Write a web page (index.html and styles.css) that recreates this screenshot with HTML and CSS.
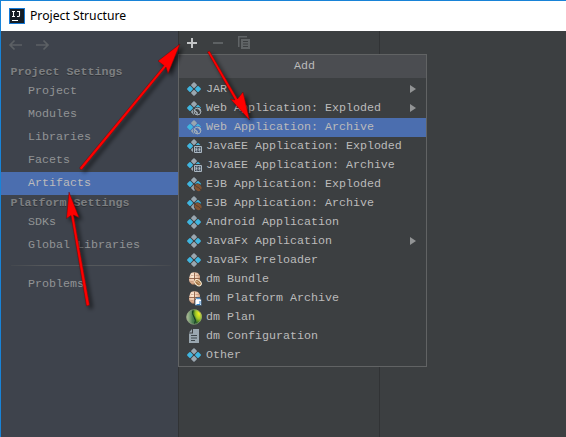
FILE: index.html
```html
<!DOCTYPE html>
<html lang="en">
<head>
<meta charset="utf-8">
<title>Project Structure</title>
<link rel="stylesheet" href="styles.css">
</head>
<body>
<svg class="defs" aria-hidden="true">
  <defs>
    <g id="diamonds">
      <path fill="#9aa7b0" d="M7 1.200 9 3.200 7 5.200 5 3.200ZM7 8.800 9 10.800 7 12.800 5 10.800Z" stroke="#9aa7b0" stroke-width="1.800" stroke-linejoin="round"/>
      <path fill="#40b6e0" d="M3 5 5 7 3 9 1 7ZM11 5 13 7 11 9 9 7Z" stroke="#40b6e0" stroke-width="1.800" stroke-linejoin="round"/>
    </g>
    <g id="web">
      <use href="#diamonds"/>
      <circle class="cut" cx="10.500" cy="10.500" r="4.600"/>
      <circle cx="10.500" cy="10.500" r="3.400" fill="none" stroke="#aab4bc" stroke-width="1"/>
      <path d="M7.500 9.500 10 11.500 10.200 13.800M10.500 7.500 12.500 8 13.500 10.500" fill="none" stroke="#aab4bc" stroke-width="1.400"/>
    </g>
    <g id="ee">
      <use href="#diamonds"/>
      <path class="cut" d="M6 6h9v9H6z"/>
      <path d="M7.500 7.500h7v6h-7z" fill="#394350" stroke="#aab7c1"/>
      <path d="M10.500 9H9v3h1.500M9 10.500h1.500M13.500 9H12v3h1.500M12 10.500h1.500" fill="none" stroke="#b8c5ce" stroke-width=".9"/>
    </g>
    <g id="ejb">
      <use href="#diamonds"/>
      <ellipse class="cut" cx="11" cy="10.500" rx="4.500" ry="4" transform="rotate(45 11 10.500)"/>
      <ellipse cx="11" cy="10.500" rx="3.800" ry="3.100" fill="#825332" transform="rotate(45 11 10.500)"/>
      <path d="M8 8C9 10.500 12 9.500 14 13.300" fill="none" stroke="#49392f" stroke-width=".9"/>
    </g>
    <radialGradient id="tan" cx=".35" cy=".3" r=".75"><stop offset="0" stop-color="#fff0df"/><stop offset=".6" stop-color="#e6bea3"/><stop offset="1" stop-color="#b98260"/></radialGradient>
    <radialGradient id="lime" cx=".7" cy=".25" r=".7"><stop offset="0" stop-color="#f5f51c"/><stop offset=".55" stop-color="#a3c928"/><stop offset="1" stop-color="#276128"/></radialGradient>
    <linearGradient id="green"><stop offset="0" stop-color="#bac7a3"/><stop offset=".4" stop-color="#4c8052"/><stop offset="1" stop-color="#07331b"/></linearGradient>
    <g id="beans">
      <path d="M4 1Q7-.5 11 1L13 4Q13.500 7 12 10L9 12.500H5L2.500 10Q1 6 4 1Z" fill="url(#tan)"/>
      <path d="M7.500 .5V12M2 6.500H13" stroke="#8b5c44" stroke-width=".9" fill="none"/>
      <path d="M4 3.500H6.500M8.500 3.500H12M3.500 9.500H6.500" stroke="#b98a6e" stroke-width=".6" fill="none"/>
    </g>
    <g id="bundle">
      <use href="#beans"/>
      <ellipse cx="11" cy="10.700" rx="3.700" ry="2.500" fill="#a77747" stroke="#fff0d6" transform="rotate(42 11 10.700)"/>
      <path d="M8.500 9.200Q11 9 13 12.500" fill="none" stroke="#fff0d6" stroke-width=".5"/>
    </g>
    <g id="jar">
      <use href="#beans"/>
      <path d="M9 6.500h4.500v1.500l1 1v5.500H8V9l1-1z" fill="#fff" stroke="#23415f" stroke-width=".7"/>
      <path d="M9.500 7.700h3.500M13 10v3.500H9.500" stroke="#3483c9" fill="none"/>
    </g>
    <g id="plan">
      <circle cx="7" cy="7" r="7.600" fill="url(#green)"/>
      <path d="M6-.4A7.500 7.500 0 1 1 9 14.300Q10 10 8 7 5 4 6-.4Z" fill="url(#lime)"/>
      <path d="M6-.3Q4.500 4 7 7T7.500 14.400" fill="none" stroke="#12371a"/>
      <circle cx="7" cy="7" r="7.300" fill="none" stroke="#8e9b7e" stroke-width=".7"/>
    </g>
    <g id="doc">
      <path d="M6 0h6v14H2V4.500h4zM5 0v3.500H2z" fill="#9aa7b0"/>
      <path d="M4 6.500h6M4 9h6M4 11.500h4" stroke="#3d464b" stroke-width="1"/>
    </g>
    <filter id="shadow" x="-30%" y="-30%" width="160%" height="160%"><feDropShadow dx="3" dy="3" stdDeviation="2" flood-color="#000" flood-opacity=".65"/></filter>
  </defs>
</svg>
<div class="window">
  <header class="titlebar">
    <svg class="logo" viewBox="0 0 16 16"><path fill="#1679d5" d="M0 0h16v16H0z"/><path fill="#151c24" d="M1 1h14v14H1z"/><path d="M3 3.500h3M4.500 3.500v5M3 8.500h3M8 3.500h2.500v4q0 1-1 1H8M3 12.500h6" fill="none" stroke="#fff" stroke-width="1.100"/></svg>
    <h1>Project Structure</h1>
  </header>
  <main>
    <nav class="sidebar">
      <div class="history">
        <svg viewBox="0 0 42 12"><path d="M14 6H2M6.500 1.500 2 6l4.500 4.500M28 6h12M35.500 1.500 40 6l-4.500 4.500" fill="none" stroke="#5c6064" stroke-width="1.700"/></svg>
      </div>
      <h2>Project Settings</h2>
      <ul>
        <li>Project</li><li>Modules</li><li>Libraries</li><li>Facets</li><li class="selected">Artifacts</li>
      </ul>
      <h2 class="platform">Platform Settings</h2>
      <ul>
        <li>SDKs</li><li>Global Libraries</li>
      </ul>
      <hr>
      <ul><li>Problems</li></ul>
    </nav>
    <section class="artifacts">
      <div class="toolbar">
        <svg viewBox="0 0 70 16"><path d="M8 3v10M3 8h10" stroke="#c3c5c6" stroke-width="2"/><path d="M29 8h10" stroke="#5d6163" stroke-width="2"/><path d="M54.750 12V1.750H63" fill="none" stroke="#606466" stroke-width="1.500"/><path d="M57 4h9v10H57z" fill="#606466"/><path d="M59 6.500h5M59 9h5M59 11.500h5" stroke="#3c3f41"/></svg>
      </div>
      <div class="popup">
        <div class="popup-title">Add</div>
        <ul class="menu">
          <li><svg viewBox="0 0 16 16"><use href="#diamonds"/></svg><span>JAR</span><i></i></li>
          <li><svg viewBox="0 0 16 16"><use href="#web"/></svg><span>Web Application: Exploded</span><i></i></li>
          <li class="selected"><svg viewBox="0 0 16 16"><use href="#web"/></svg><span>Web Application: Archive</span></li>
          <li><svg viewBox="0 0 16 16"><use href="#ee"/></svg><span>JavaEE Application: Exploded</span></li>
          <li><svg viewBox="0 0 16 16"><use href="#ee"/></svg><span>JavaEE Application: Archive</span></li>
          <li><svg viewBox="0 0 16 16"><use href="#ejb"/></svg><span>EJB Application: Exploded</span></li>
          <li><svg viewBox="0 0 16 16"><use href="#ejb"/></svg><span>EJB Application: Archive</span></li>
          <li><svg viewBox="0 0 16 16"><use href="#diamonds"/></svg><span>Android Application</span></li>
          <li><svg viewBox="0 0 16 16"><use href="#diamonds"/></svg><span>JavaFx Application</span><i></i></li>
          <li><svg viewBox="0 0 16 16"><use href="#diamonds"/></svg><span>JavaFx Preloader</span></li>
          <li><svg viewBox="0 0 16 16"><use href="#bundle"/></svg><span>dm Bundle</span></li>
          <li><svg viewBox="0 0 16 16"><use href="#jar"/></svg><span>dm Platform Archive</span></li>
          <li><svg viewBox="0 0 16 16"><use href="#plan"/></svg><span>dm Plan</span></li>
          <li><svg viewBox="0 0 16 16"><use href="#doc"/></svg><span>dm Configuration</span></li>
          <li><svg viewBox="0 0 16 16"><use href="#diamonds"/></svg><span>Other</span></li>
        </ul>
      </div>
    </section>
    <section class="details"></section>
  </main>
</div>
<svg class="arrows" viewBox="0 0 566 437">
  <g fill="#f00" stroke="#5a0000" stroke-width=".4" filter="url(#shadow)">
    <path d="M79.500 168 164 65.500 158 61 180 44 168 73.500 166 67 81.500 170Z"/>
    <path d="M207.500 52 235 100 230.500 99 249.500 120 243 92 237.500 99 209.500 51Z"/>
    <path d="M69 192 79 217.500 73.500 215 89.500 305 86.500 306 71 215.500 66.500 218.500Z"/>
  </g>
</svg>
</body>
</html>
```
FILE: styles.css
```css
* { box-sizing: border-box; }
body { margin: 0; overflow: hidden; }
ul { list-style: none; margin: 0; padding: 0; }
.defs { position: absolute; width: 0; height: 0; }
.window {
  --cut: #3c3f41;
  width: 566px;
  height: 437px;
  display: flex;
  flex-direction: column;
  border: solid #1883d7;
  border-width: 1px 0 0 1px;
  font: 11.667px/19px "Liberation Mono", monospace;
  color: #bbb;
  background: #3c3f41;
}
.titlebar {
  height: 30px;
  display: flex;
  align-items: center;
  gap: 5px;
  padding-left: 8px;
  background: #fff;
}
.logo { width: 16px; height: 16px; }
h1 { margin: 0; font: 12.2px/20px "Noto Sans", sans-serif; color: #000; }
main { flex: 1; display: flex; min-height: 0; }
.sidebar { width: 177px; background: #3e434c; color: #919395; }
.history { height: 31px; padding: 8px 0 0 7px; }
.history svg { display: block; width: 42px; height: 12px; }
h2 { margin: 0; padding-left: 9.5px; height: 18px; font: bold 11.667px/21px "Liberation Mono", monospace; color: #7d7f81; text-shadow: 0 1px #303338; }
.platform { height: 16px; line-height: 17px; }
.sidebar li { height: 23px; padding-left: 27px; line-height: 23px; }
.sidebar .selected { background: #4b6eaf; color: #bbb; }
hr { height: 1px; margin: 8px 7px 7px 10px; border: 0; background: linear-gradient(90deg, #44484e, #55585b 20%, #55585b 80%, #44484e); }
.artifacts { position: relative; width: 202px; border: solid #313335; border-width: 0 1px; }
.toolbar { height: 24px; padding: 4px 0 0 5px; }
.toolbar svg { display: block; width: 70px; height: 16px; }
.details { flex: 1; }
.popup {
  position: absolute;
  left: -1px;
  top: 23px;
  width: 249px;
  height: 313px;
  border: 1px solid #616364;
  background: #3c3f41;
}
.popup-title { height: 23px; line-height: 22px; padding-left: 4px; text-align: center; background: #4b4d51; }
.menu { padding-top: 2px; }
.menu li { height: 19px; display: flex; align-items: center; padding: 0 10px 1px 8px; line-height: 17px; white-space: pre; }
.menu .selected { --cut: #4b6eaf; background: #4b6eaf; }
.menu svg { width: 16px; height: 16px; margin-right: 3px; overflow: visible; transform: translateY(1px); flex: none; }
.menu span { flex: 1; }
.menu i { border: solid transparent; border-width: 4px 0 4px 6px; border-left-color: #929495; }
.cut { fill: var(--cut); }
.arrows { position: absolute; left: 0; top: 0; width: 566px; height: 437px; pointer-events: none; }
```
